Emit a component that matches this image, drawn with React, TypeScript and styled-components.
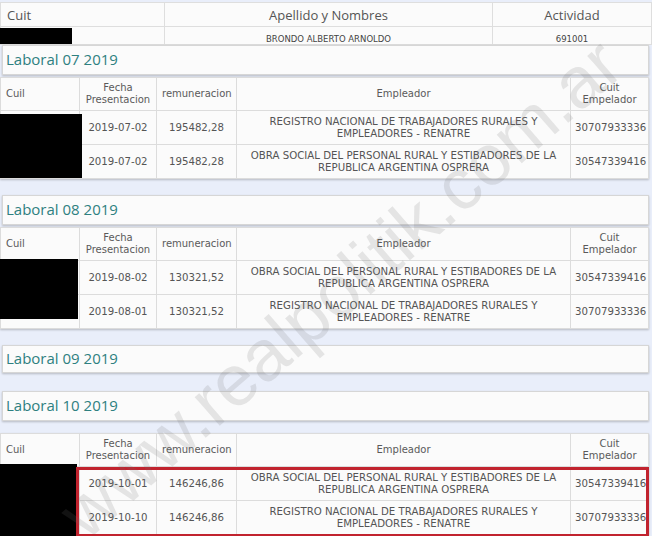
import React from 'react';
import styled, { createGlobalStyle } from 'styled-components';

const GlobalStyle = createGlobalStyle`
  html, body {
    margin: 0;
    padding: 0;
    background: #e9eefa;
  }
  body {
    width: 652px;
    height: 536px;
    overflow: hidden;
  }
`;

const Page = styled.div`
  position: relative;
  width: 652px;
  height: 536px;
  overflow: hidden;
  padding-top: 2px;
  box-sizing: border-box;
  font-family: 'DejaVu Sans', Verdana, sans-serif;
  color: #555;
`;

const PersonTable = styled.table`
  width: 651px;
  border-collapse: collapse;
  table-layout: fixed;
  background: #fbfbfb;
  border: 1px solid #d4d4d4;
`;

const PersonHead = styled.th<{ $left?: boolean }>`
  height: 23px;
  padding: 0 6px;
  font-family: 'Open Sans', sans-serif;
  font-weight: 400;
  font-size: 13px;
  color: #555;
  text-align: ${(p) => (p.$left ? 'left' : 'center')};
  border: 1px solid #dedede;
`;

const PersonCell = styled.td`
  height: 17px;
  padding: 0;
  font-size: 8.5px;
  line-height: 10px;
  vertical-align: bottom;
  text-align: center;
  color: #444;
  border: 1px solid #dedede;
`;

const Section = styled.section<{ $gap: number }>`
  position: relative;
  margin-bottom: ${(p) => p.$gap}px;
`;

const TitleBar = styled.div<{ $h: number }>`
  width: 647px;
  height: ${(p) => p.$h}px;
  margin-left: 2px;
  box-sizing: border-box;
  display: flex;
  align-items: center;
  padding: 0 3px 2px;
  background: #fbfbfb;
  border: 1px solid #d6d6d6;
  box-shadow: 0 1px 2px rgba(0, 0, 0, 0.22);
  font-family: 'Open Sans', sans-serif;
  font-size: 15px;
  color: #2e8080;
`;

const DataTable = styled.table<{ $top: number }>`
  width: 648px;
  margin-top: ${(p) => p.$top}px;
  border-collapse: collapse;
  table-layout: fixed;
  background: #fbfbfb;
  box-shadow: 0 1px 2px rgba(0, 0, 0, 0.22);
`;

const HeadCell = styled.th<{ $left?: boolean }>`
  height: 32px;
  padding: 0 5px;
  font-weight: 400;
  font-size: 10px;
  line-height: 12px;
  color: #5a5a5a;
  text-align: ${(p) => (p.$left ? 'left' : 'center')};
  border: 1px solid #dcdcdc;
`;

const Cell = styled.td`
  height: 33px;
  padding: 0 4px;
  font-size: 10.2px;
  line-height: 12px;
  color: #555;
  text-align: center;
  border: 1px solid #dcdcdc;
`;

const Redaction = styled.div`
  position: absolute;
  left: 0;
  background: #000;
`;

const Highlight = styled.div`
  position: absolute;
  left: 76px;
  width: 573px;
  height: 70px;
  box-sizing: border-box;
  border: 3px solid #c1232e;
  pointer-events: none;
`;

const Watermark = styled.div`
  position: absolute;
  left: 340px;
  top: 288px;
  transform: translate(-50%, -50%) rotate(-41deg);
  font-family: 'Liberation Sans', Arial, sans-serif;
  font-size: 72px;
  white-space: nowrap;
  color: rgba(110, 110, 110, 0.16);
  pointer-events: none;
`;

type Row = { fecha: string; rem: string; emp: string; cuit: string };

const RENATRE = 'REGISTRO NACIONAL DE TRABAJADORES RURALES Y EMPLEADORES - RENATRE';
const OSPRERA = 'OBRA SOCIAL DEL PERSONAL RURAL Y ESTIBADORES DE LA REPUBLICA ARGENTINA OSPRERA';

const sections: {
  title: string;
  gap: number;
  top: number;
  bar: number;
  rows: Row[];
  box?: { top: number; width: number; height: number };
  mark?: number;
}[] = [
  {
    title: 'Laboral 07 2019',
    gap: 16,
    top: 2,
    bar: 30,
    rows: [
      { fecha: '2019-07-02', rem: '195482,28', emp: RENATRE, cuit: '30707933336' },
      { fecha: '2019-07-02', rem: '195482,28', emp: OSPRERA, cuit: '30547339416' },
    ],
    box: { top: 69, width: 82, height: 64 },
  },
  {
    title: 'Laboral 08 2019',
    gap: 16,
    top: 2,
    bar: 30,
    rows: [
      { fecha: '2019-08-02', rem: '130321,52', emp: OSPRERA, cuit: '30547339416' },
      { fecha: '2019-08-01', rem: '130321,52', emp: RENATRE, cuit: '30707933336' },
    ],
    box: { top: 64, width: 78, height: 60 },
  },
  { title: 'Laboral 09 2019', gap: 18, top: 0, bar: 28, rows: [] },
  {
    title: 'Laboral 10 2019',
    gap: 0,
    top: 12,
    bar: 30,
    rows: [
      { fecha: '2019-10-01', rem: '146246,86', emp: OSPRERA, cuit: '30547339416' },
      { fecha: '2019-10-10', rem: '146246,86', emp: RENATRE, cuit: '30707933336' },
    ],
    box: { top: 73, width: 77, height: 80 },
    mark: 76,
  },
];

const App = () => {
  return (
    <Page>
      <GlobalStyle />
      <Section $gap={0}>
        <PersonTable>
          <colgroup>
            <col style={{ width: 164 }} />
            <col style={{ width: 328 }} />
            <col style={{ width: 159 }} />
          </colgroup>
          <thead>
            <tr>
              <PersonHead $left>Cuit</PersonHead>
              <PersonHead>Apellido y Nombres</PersonHead>
              <PersonHead>Actividad</PersonHead>
            </tr>
          </thead>
          <tbody>
            <tr>
              <PersonCell />
              <PersonCell>BRONDO ALBERTO ARNOLDO</PersonCell>
              <PersonCell>691001</PersonCell>
            </tr>
          </tbody>
        </PersonTable>
        <Redaction style={{ top: 26, width: 72, height: 16 }} />
      </Section>

      {sections.map((s) => (
        <Section key={s.title} $gap={s.gap}>
          <TitleBar $h={s.bar}>{s.title}</TitleBar>
          {s.rows.length > 0 && (
            <DataTable $top={s.top}>
              <colgroup>
                <col style={{ width: 79 }} />
                <col style={{ width: 77 }} />
                <col style={{ width: 80 }} />
                <col style={{ width: 334 }} />
                <col style={{ width: 78 }} />
              </colgroup>
              <thead>
                <tr>
                  <HeadCell $left>Cuil</HeadCell>
                  <HeadCell>
                    Fecha
                    <br />
                    Presentacion
                  </HeadCell>
                  <HeadCell>remuneracion</HeadCell>
                  <HeadCell>Empleador</HeadCell>
                  <HeadCell>
                    Cuit
                    <br />
                    Empelador
                  </HeadCell>
                </tr>
              </thead>
              <tbody>
                {s.rows.map((r, i) => (
                  <tr key={i}>
                    <Cell />
                    <Cell>{r.fecha}</Cell>
                    <Cell>{r.rem}</Cell>
                    <Cell>{r.emp}</Cell>
                    <Cell>{r.cuit}</Cell>
                  </tr>
                ))}
              </tbody>
            </DataTable>
          )}
          {s.box && <Redaction style={{ top: s.box.top, width: s.box.width, height: s.box.height }} />}
          {s.mark !== undefined && <Highlight style={{ top: s.mark }} />}
        </Section>
      ))}

      <Watermark>www.realpolitik.com.ar</Watermark>
    </Page>
  );
};

export default App;
